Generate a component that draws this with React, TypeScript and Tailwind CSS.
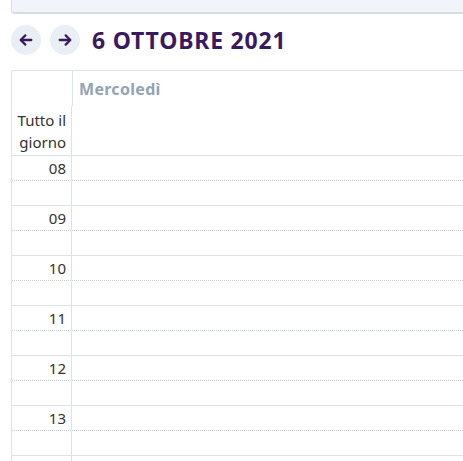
import React from 'react';

const hours = ['08', '09', '10', '11', '12', '13', ''];

const Arrow = ({ dir }: { dir: 'left' | 'right' }) => (
  <svg width="16" height="16" viewBox="0 0 24 24" fill="none" stroke="#3a1a5e" strokeWidth="3.4" strokeLinecap="round" strokeLinejoin="round">
    {dir === 'left' ? (
      <>
        <path d="M20 12H5" />
        <path d="M11 5l-7 7 7 7" />
      </>
    ) : (
      <>
        <path d="M4 12h15" />
        <path d="M13 5l7 7-7 7" />
      </>
    )}
  </svg>
);

const App = () => {
  return (
    <div className="w-[463px] h-[461px] overflow-hidden bg-white" style={{ fontFamily: '"Noto Sans", "Open Sans", sans-serif' }}>
      {/* top toolbar edge */}
      <div className="ml-[11px] h-[14px] bg-[#f1f5f9] border-l border-b-2 border-[#d6dce4] rounded-bl-[4px]" />

      {/* navigation */}
      <div className="flex items-center mt-[11px] ml-[11px] h-[30px]">
        <button className="w-[30px] h-[30px] rounded-full bg-[#e9eff4] flex items-center justify-center">
          <Arrow dir="left" />
        </button>
        <button className="w-[30px] h-[30px] rounded-full bg-[#e9eff4] flex items-center justify-center ml-[9px]">
          <Arrow dir="right" />
        </button>
        <h1 className="ml-[12px] text-[23px] font-bold text-[#3a1a5e] leading-none tracking-[0.8px]">6 OTTOBRE 2021</h1>
      </div>

      {/* calendar */}
      <div className="mt-[15px] ml-[11px] border-t border-l border-[#dde2e8]">
        {/* day header */}
        <div className="flex h-[35px]">
          <div className="w-[61px] border-r border-[#dde2e8]" />
          <div className="flex-1 pl-[6px] pt-[6px] text-[16px] font-bold text-[#94a3b4] tracking-[0.3px]">Mercoledì</div>
        </div>
        {/* all day */}
        <div className="flex h-[50px] border-b border-[#dde2e8]">
          <div className="w-[60px] border-r border-[#dde2e8] text-right pr-[5px] text-[15px] leading-[22px] text-[#333] pt-[3px]">
            Tutto il
            <br />
            giorno
          </div>
          <div className="flex-1" />
        </div>
        {/* hours */}
        {hours.map((h, i) => (
          <div key={i} className="border-b border-[#dde2e8]">
            <div className="flex h-[25px] border-b border-dotted border-[#c9ced4]">
              <div className="w-[60px] border-r border-[#dde2e8] text-right pr-[5px] text-[15px] leading-[25px] text-[#333]">{h}</div>
              <div className="flex-1" />
            </div>
            <div className="flex h-[24px]">
              <div className="w-[60px] border-r border-[#dde2e8]" />
              <div className="flex-1" />
            </div>
          </div>
        ))}
      </div>
    </div>
  );
};

export default App;
